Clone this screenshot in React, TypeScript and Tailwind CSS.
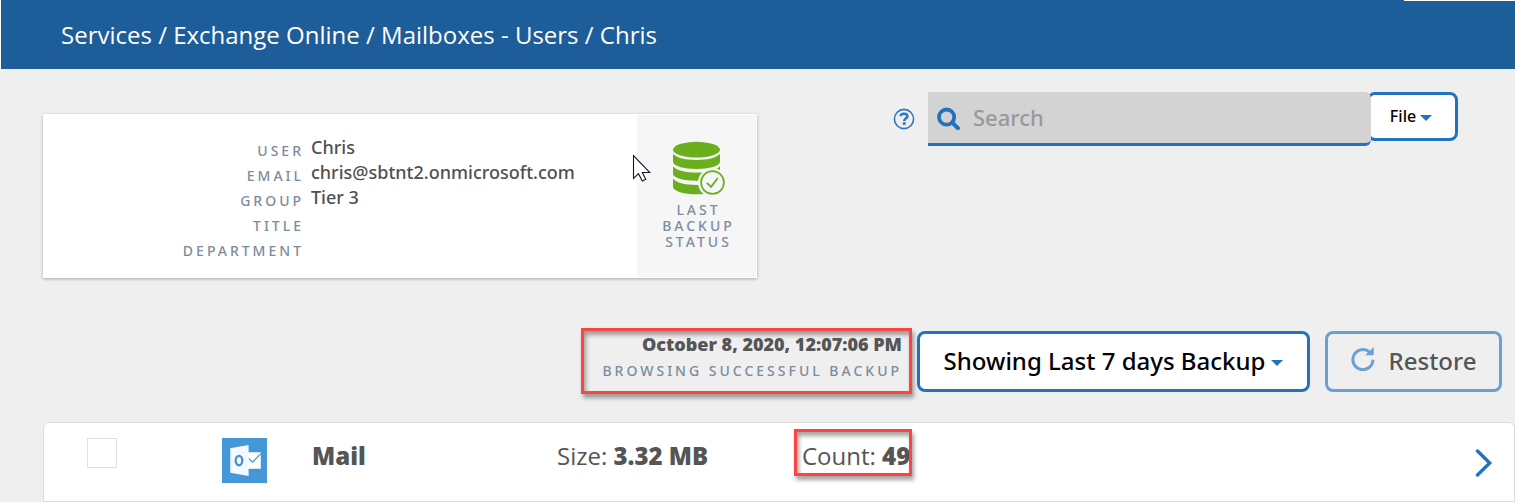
import React from "react";

const labelClass = "text-[14px] font-medium tracking-[3px] text-[#7d8b9f] uppercase";

const details = [
  { label: "User", value: "Chris" },
  { label: "Email", value: "chris@sbtnt2.onmicrosoft.com" },
  { label: "Group", value: "Tier 3" },
  { label: "Title", value: "" },
  { label: "Department", value: "" },
];

function Caret() {
  return (
    <svg viewBox="0 0 12 6" className="mt-[4px] h-[6px] w-[12px] shrink-0" fill="#2272bd" aria-hidden="true">
      <path d="M0 0h12L6 6z" />
    </svg>
  );
}

function HelpIcon() {
  return (
    <svg viewBox="0 0 22 22" className="size-[22px]" fill="none" stroke="#2f78bd" aria-hidden="true">
      <circle cx="11" cy="11" r="9.6" strokeWidth="1.6" />
      <path d="M7.6 8.2C7.8 6.4 9.2 5.7 11 5.7c2 0 3.4 1 3.4 2.6 0 2.1-3.2 2.3-3.2 4.6" strokeWidth="2.6" />
      <path d="M9.8 14.1h2.8v2.8H9.8z" fill="#2f78bd" stroke="none" />
    </svg>
  );
}

function SearchIcon() {
  return (
    <svg viewBox="0 0 24 24" className="size-6 shrink-0" fill="none" stroke="#2272bd" aria-hidden="true">
      <circle cx="9.6" cy="11.1" r="7.6" strokeWidth="3.8" />
      <path d="M15.400 16.800l5.600 5.400" strokeWidth="4" strokeLinecap="round" />
    </svg>
  );
}

function DatabaseIcon() {
  return (
    <svg viewBox="0 0 54 54" className="h-[54px] w-[54px]" fill="#6aaf1d" aria-hidden="true">
      <ellipse cx="24.5" cy="8.7" rx="23.5" ry="7.9" />
      <path d="M1 12.800c4 4.500 13 6.200 23.500 6.200S44 17.300 48 12.800v7.900c0 4.200-10.500 7.200-23.500 7.200S1 24.900 1 20.700z" />
      <path d="M1 25.200c4 4.500 13 6.300 23.500 6.300S44 29.700 48 25.200v7.600c0 4.200-10.500 7-23.500 7S1 37 1 32.800z" />
      <path d="M1 37.800c4 4.500 13 6.200 23.500 6.200S44 42.300 48 37.800v7.900c0 4.300-10.500 7.600-23.500 7.600S1 50 1 45.700z" />
      <circle cx="40.500" cy="41.500" r="14.500" fill="#f6f6f6" />
      <circle cx="40.500" cy="41.500" r="11.400" fill="#f6f6f6" stroke="#6aaf1d" strokeWidth="1.700" />
      <path d="M34.800 41.800l4.300 4 6.700-8.800" fill="none" stroke="#6aaf1d" strokeWidth="1.800" />
    </svg>
  );
}

function OutlookIcon() {
  return (
    <svg viewBox="0 0 45 45" className="size-[45px]" aria-hidden="true">
      <path d="M0 0h45v45H0z" fill="#4697d8" />
      <path d="M26 14.300h12.800v16.500H26z" fill="#fff" />
      <path d="M26.500 20.500l4 3.600 8.300-8.400" fill="none" stroke="#4697d8" strokeWidth="1.200" />
      <path d="M8.300 10.200L26.600 7v31L8.300 34.800z" fill="#f4f9fd" />
      <ellipse cx="17" cy="22.600" rx="3.300" ry="4.700" fill="none" stroke="#4a90cf" strokeWidth="2.300" />
    </svg>
  );
}

function RestoreIcon() {
  return (
    <svg viewBox="0 0 24 24" className="-mt-[4px] size-6 shrink-0" aria-hidden="true">
      <path d="M18.600 5.200A10 10 0 1 0 21.900 12.700" fill="none" stroke="#6ba1d1" strokeWidth="3" />
      <path d="M22.700 0v8.300h-8.500z" fill="#6ba1d1" />
    </svg>
  );
}

function Cursor() {
  return (
    <svg viewBox="0 0 19 28" className="absolute top-[39px] -left-[5px] h-[28px] w-[19px]" aria-hidden="true">
      <path
        d="M1.500 1.500v23l5-4.800 3.800 7.300 3.400-1.700-3.400-6.800h7.500z"
        fill="#fff"
        stroke="#16162a"
        strokeWidth="1.100"
      />
    </svg>
  );
}

export default function App() {
  return (
    <div className="min-h-screen overflow-x-hidden bg-[#efefef] font-['Noto_Sans','Open_Sans',sans-serif] text-[#555]">
      <header className="border-l border-white bg-[#1d5d99]">
        <div className="ml-auto h-px w-[111px] bg-white" />
        <nav
          className="flex h-[68px] items-center pl-[60px] font-['Open_Sans',sans-serif] text-2xl text-white"
          aria-label="Breadcrumb"
        >
          Services / Exchange Online / Mailboxes - Users / Chris
        </nav>
      </header>

      <main className="pt-[23px] pl-[43px]">
        <div className="flex items-start justify-between pr-[57px]">
          <section className="mt-[22px] flex h-[164px] w-[714px] bg-white p-px shadow-[0_1px_3px_rgba(0,0,0,0.3)]">
            <dl className="flex-1 pt-[20px]">
              {details.map((d) => (
                <div key={d.label} className="flex h-[25px]">
                  <dt className={`${labelClass} w-[260px] pt-[3px] text-right leading-[25px]`}>{d.label}</dt>
                  <dd className="pl-[7px] text-[18px] leading-[25px] font-medium text-[#505050]">{d.value}</dd>
                </div>
              ))}
            </dl>
            <div className="relative flex w-[119px] flex-col items-center bg-[#f6f6f6] pt-[26px] pl-[4px]">
              <DatabaseIcon />
              <p className={`${labelClass} mt-[7px] text-center leading-4`}>
                Last
                <br />
                Backup
                <br />
                Status
              </p>
              <Cursor />
            </div>
          </section>

          <div className="flex items-start">
            <button type="button" aria-label="Help" className="mt-[16px] mr-[13px]">
              <HelpIcon />
            </button>
            <label className="z-10 flex h-[54px] w-[443px] items-center gap-[12px] rounded-r-md border-b-3 border-[#2272bd] bg-[#d3d3d3] pl-[9px]">
              <SearchIcon />
              <input
                type="search"
                aria-label="Search"
                placeholder="Search"
                className="min-w-0 flex-1 bg-transparent text-[22px] font-medium outline-none placeholder:text-[#999]"
              />
            </label>
            <button
              type="button"
              className="-ml-[4px] flex h-[49px] w-[91px] items-center justify-center gap-[4px] rounded-lg border-3 border-[#2272bd] bg-white pr-[3px] pb-[2px] text-base font-medium text-black"
            >
              File
              <Caret />
            </button>
          </div>
        </div>

        <div className="mt-[50px] flex items-start justify-end pr-[13px]">
          <div className="h-[66px] w-[331px] border-3 border-[#fb4545] pr-[7px] text-right shadow-[2px_4px_4px_rgba(0,0,0,0.35),inset_2px_4px_4px_rgba(0,0,0,0.35)]">
            <p className="text-[18px] leading-[26px] font-black">October 8, 2020, 12:07:06 PM</p>
            <p className={`${labelClass} leading-[27px] whitespace-nowrap`}>Browsing successful backup</p>
          </div>
          <button
            type="button"
            className="mt-[3px] ml-[5px] flex h-[61px] w-[393px] items-center justify-center gap-[6px] rounded-lg border-3 border-[#2272bd] bg-white pb-[2px] text-2xl font-medium whitespace-nowrap text-black"
          >
            Showing Last 7 days Backup
            <Caret />
          </button>
          <button
            type="button"
            className="mt-[3px] ml-[15px] flex h-[61px] w-[177px] items-center justify-center gap-[14px] rounded-lg border-3 border-[#6ba1d1] pb-[2px] text-2xl font-medium"
          >
            <RestoreIcon />
            Restore
          </button>
        </div>

        <section className="mt-[28px] flex h-[80px] items-start rounded-t-md border border-[#dcdcdc] bg-white font-['Open_Sans',sans-serif] text-2xl leading-[34px]">
          <input
            type="checkbox"
            aria-label="Select Mail"
            className="mt-[15px] ml-[43px] size-[30px] shrink-0 appearance-none border border-[#e0e0e0] bg-white"
          />
          <div className="mt-[15px] ml-[105px] shrink-0">
            <OutlookIcon />
          </div>
          <h2 className="mt-[16px] ml-[45px] w-[245px] shrink-0 font-extrabold">Mail</h2>
          <p className="mt-[16px] w-[245px] shrink-0">
            Size: <strong className="font-extrabold">3.32 MB</strong>
          </p>
          <p className="relative mt-[16px] shrink-0">
            Count: <strong className="font-extrabold">49</strong>
            <span className="absolute -top-[10px] -left-[8px] h-[47px] w-[118px] border-3 border-[#fb4545] shadow-[2px_4px_4px_rgba(0,0,0,0.35),inset_2px_4px_4px_rgba(0,0,0,0.35)]" />
          </p>
          <a href="#mail" aria-label="Open Mail" className="mt-[26px] mr-[21px] ml-auto">
            <svg viewBox="0 0 18 28" className="h-[28px] w-[18px]" fill="none" stroke="#2272bd" strokeWidth="3.400">
              <path d="M2.500 2L14.700 14 2.500 26" strokeLinecap="round" />
            </svg>
          </a>
        </section>
      </main>
    </div>
  );
}
